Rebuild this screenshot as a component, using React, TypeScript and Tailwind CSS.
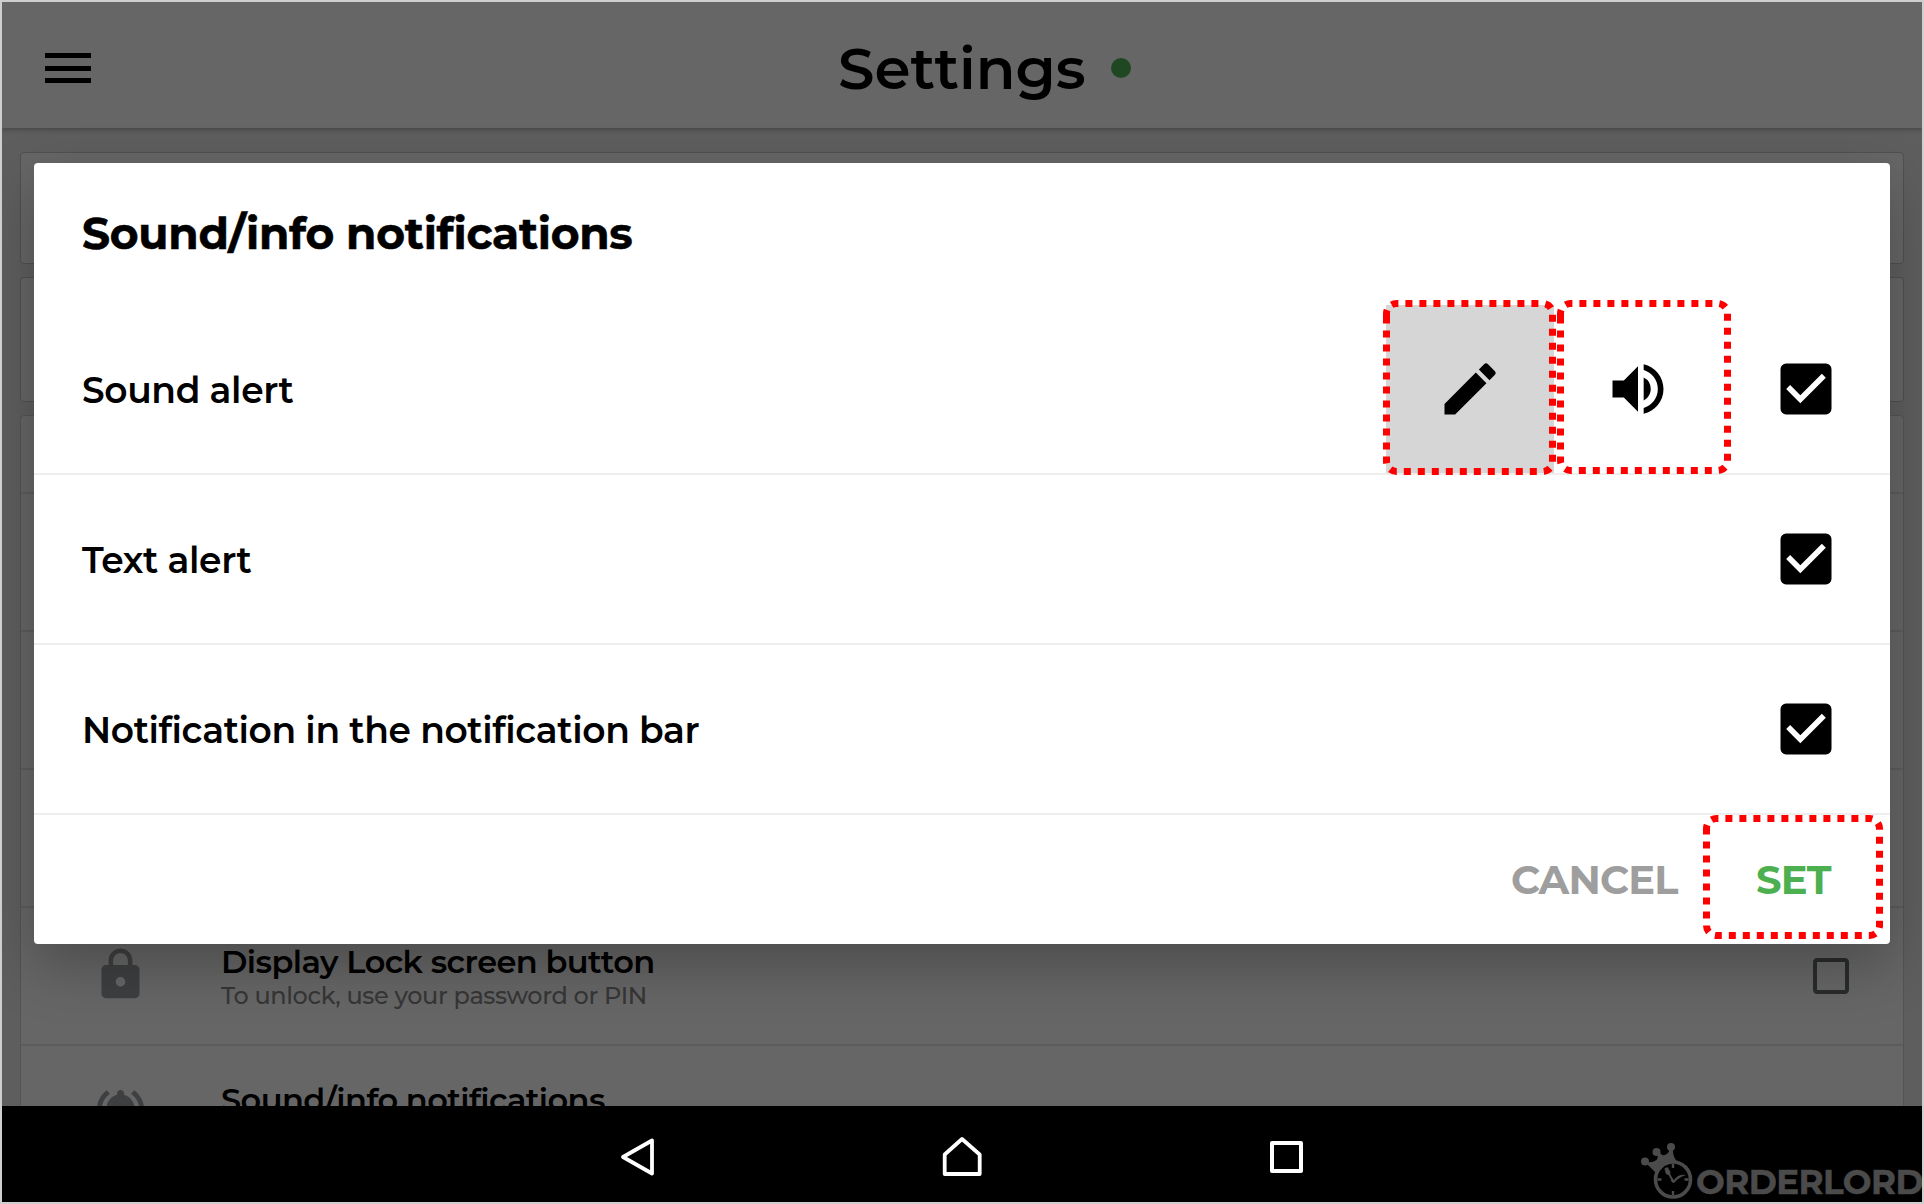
import React from "react";
import {
  MdCheckBox,
  MdCheckBoxOutlineBlank,
  MdEdit,
  MdLock,
  MdNotificationsActive,
  MdVolumeUp,
} from "react-icons/md";

function Header() {
  return (
    <header className="relative z-10 flex h-[126px] shrink-0 items-center bg-[#666666] pt-[6px] pl-[43px] shadow-[0_2px_4px_rgba(0,0,0,0.25)]">
      <div className="flex w-[46px] flex-col gap-[7.5px]">
        <span className="h-[5px] bg-black" />
        <span className="h-[5px] bg-black" />
        <span className="h-[5px] bg-black" />
      </div>
      <h1 className="mt-[1px] ml-[747px] w-[273px] text-[58px] leading-none font-semibold whitespace-nowrap">
        Settings
      </h1>
      <span className="h-5 w-5 rounded-full bg-[#1f4721]" />
    </header>
  );
}

function SettingRow({
  icon,
  title,
  subtitle,
  checkbox,
}: {
  icon?: React.ReactNode;
  title?: string;
  subtitle?: string;
  checkbox?: boolean;
}) {
  return (
    <div className="flex h-[138px] shrink-0 items-center border-b-2 border-[#5c5c5c] pr-[48px] pl-[71px]">
      <div className="w-[129px] pb-[3px] text-[#3d3f40]">{icon}</div>
      <div className="flex-1">
        <div className="h-[38px] text-[32px] leading-[38px] font-semibold tracking-[-0.56px] whitespace-nowrap">
          {title}
        </div>
        <div className="h-[29px] text-[24px] leading-[29px] font-medium tracking-[-0.36px] whitespace-nowrap text-[#363636]">
          {subtitle}
        </div>
      </div>
      {checkbox && <MdCheckBoxOutlineBlank size={48} className="text-[#2a2c2c]" />}
    </div>
  );
}

function SettingsList() {
  return (
    <main className="flex h-[978px] flex-col gap-[13px] overflow-hidden bg-[#5e5e5e] px-[18px] pt-[24px]">
      <section className="h-[112px] shrink-0 rounded-[4px] border border-[#505050] bg-[#666666]" />
      <section className="h-[125px] shrink-0 rounded-[4px] border border-[#505050] bg-[#666666]" />
      <section className="shrink-0 rounded-[4px] border border-[#545454] bg-[#666666]">
        <div className="h-[78px] border-b-2 border-[#5c5c5c]" />
        <SettingRow />
        <SettingRow />
        <SettingRow />
        <SettingRow
          icon={<MdLock size={57} />}
          title="Display Lock screen button"
          subtitle="To unlock, use your password or PIN"
          checkbox
        />
        <SettingRow icon={<MdNotificationsActive size={57} />} title="Sound/info notifications" />
      </section>
    </main>
  );
}

function BrandMark() {
  return (
    <div className="absolute right-0 bottom-0 flex h-[60px] w-[284px] overflow-hidden text-[#4b4b4b]">
      <svg width="58" height="60" viewBox="-1 0 58 60" fill="none" className="shrink-0">
        <path
          d="M17 31 L6 20 Q14 21 17.500 18 Q20 15 17 10 L20 9 Q22 14 26 13 Q31 11 30.500 5 L34 5 Q33 13 38 20 Q24 20 17 31Z"
          fill="currentColor"
        />
        <circle cx="6" cy="19.500" r="4" fill="currentColor" />
        <circle cx="17.500" cy="10" r="4" fill="currentColor" />
        <circle cx="32" cy="5" r="4" fill="currentColor" />
        <circle cx="34" cy="37.500" r="17.500" fill="#000" stroke="currentColor" strokeWidth="3.600" />
        <path d="M34 22v4M34 53v-4M18.500 37.500h4M49.500 37.500h-4" stroke="currentColor" strokeWidth="2.400" />
        <path d="M34 39 L29.500 31" stroke="currentColor" strokeWidth="2" />
        <path d="M25.500 26.500l3-1.500 3 5q0 3-2 3t-3-2z" fill="currentColor" />
        <path d="M32 36 L35 38 Q39 32 47 33 Q40 35 35.500 40.500 Q33 42 31.800 38Z" fill="currentColor" />
      </svg>
      <span className="mt-[23px] text-[34px] leading-[34px] font-bold tracking-[-0.5px] whitespace-nowrap [-webkit-text-stroke:0.5px_#4b4b4b]">
        ORDERLORD
      </span>
    </div>
  );
}

function NavigationBar() {
  return (
    <nav className="relative flex h-[96px] shrink-0 items-center bg-black pt-[6px] pl-[616px]">
      <svg width="40" height="42" viewBox="0 0 40 42" fill="none" stroke="#fff" strokeWidth="3.800" strokeLinejoin="round">
        <path d="M34 4.500V37.500L5 21Z" />
      </svg>
      <svg width="44" height="42" viewBox="0 0 44 42" fill="none" stroke="#fff" strokeWidth="3.800" strokeLinejoin="round" className="ml-[282px]">
        <path d="M4.700 18.500L22 3L39.700 18.500V38H4.700Z" />
      </svg>
      <span className="ml-[286px] h-[32px] w-[33px] rounded-[2px] border-4 border-white" />
      <BrandMark />
    </nav>
  );
}

function AlertRow({ label, children }: { label: string; children?: React.ReactNode }) {
  return (
    <div className="flex h-[170px] items-center border-b-2 border-[#eeeeee] pr-[50px] pl-[48px]">
      <div className="flex-1 pt-[1px] text-[36px] leading-none font-semibold tracking-[-0.36px] whitespace-nowrap">
        {label}
      </div>
      {children}
      <MdCheckBox size={68} />
    </div>
  );
}

function NotificationDialog() {
  return (
    <div
      role="dialog"
      className="absolute top-[161px] left-[32px] z-20 flex h-[781px] w-[1856px] flex-col rounded-[4px] bg-white shadow-[0_22px_56px_rgba(0,0,0,0.26)]"
    >
      <div className="flex h-[142px] items-center pb-[2px] pl-[48px]">
        <h2 className="text-[44px] leading-none font-bold tracking-[-0.32px] whitespace-nowrap [-webkit-text-stroke:0.5px_#000]">
          Sound/info notifications
        </h2>
      </div>
      <AlertRow label="Sound alert">
        <button className="flex h-[168px] w-[168px] items-center justify-center bg-[#d6d6d6]">
          <MdEdit size={68} />
        </button>
        <button className="flex h-[168px] w-[168px] items-center justify-center">
          <MdVolumeUp size={68} />
        </button>
        <div className="w-[50px]" />
      </AlertRow>
      <AlertRow label="Text alert" />
      <AlertRow label="Notification in the notification bar" />
      <div className="flex flex-1 items-center justify-end pr-[59px] text-[40px] leading-none font-bold tracking-[-0.8px]">
        <button className="w-[245px] text-left text-[#9e9e9e]">CANCEL</button>
        <button className="w-[75px] text-left text-[#4caf50]">SET</button>
      </div>
    </div>
  );
}

function Highlight({ width, height, className }: { width: number; height: number; className: string }) {
  const w = width - 7;
  const h = height - 7;
  return (
    <svg
      width={width}
      height={height}
      fill="none"
      stroke="#ff0000"
      strokeWidth="7"
      strokeDasharray="7 7"
      className={"pointer-events-none absolute z-30 " + className}
    >
      <path
        d={`M3.500 17V13.500a10 10 0 0 1 10-10h${w - 20}a10 10 0 0 1 10 10v${h - 20}a10 10 0 0 1-10 10h${20 - w}a10 10 0 0 1-10-10V17`}
      />
    </svg>
  );
}

export default function App() {
  return (
    <div className="relative flex h-[1204px] w-[1924px] flex-col overflow-hidden border-2 border-[#cfcfcf] bg-[#5e5e5e] font-['Montserrat','Inter',sans-serif] text-black">
      <Header />
      <SettingsList />
      <NavigationBar />
      <NotificationDialog />
      <Highlight width={173} height={175} className="top-[298px] left-[1381px]" />
      <Highlight width={174} height={174} className="top-[298px] left-[1555px]" />
      <Highlight width={180} height={124} className="top-[813px] left-[1701px]" />
    </div>
  );
}
